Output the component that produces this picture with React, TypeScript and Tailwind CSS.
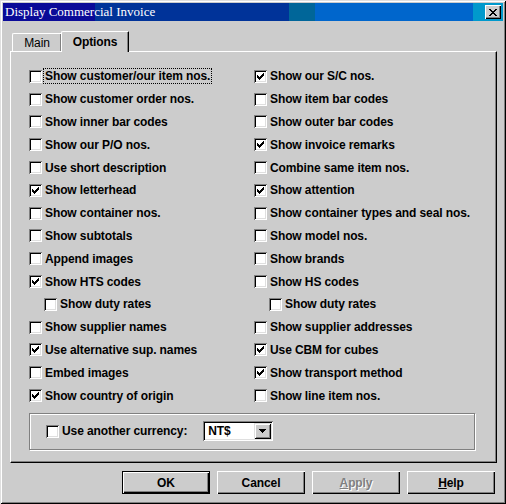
import React from "react";

type Opt = { label: string; checked?: boolean; indent?: boolean; focus?: boolean };

const left: Opt[] = [
  { label: "Show customer/our item nos.", focus: true },
  { label: "Show customer order nos." },
  { label: "Show inner bar codes" },
  { label: "Show our P/O nos." },
  { label: "Use short description" },
  { label: "Show letterhead", checked: true },
  { label: "Show container nos." },
  { label: "Show subtotals" },
  { label: "Append images" },
  { label: "Show HTS codes", checked: true },
  { label: "Show duty rates", indent: true },
  { label: "Show supplier names" },
  { label: "Use alternative sup. names", checked: true },
  { label: "Embed images" },
  { label: "Show country of origin", checked: true },
];

const right: Opt[] = [
  { label: "Show our S/C nos.", checked: true },
  { label: "Show item bar codes" },
  { label: "Show outer bar codes" },
  { label: "Show invoice remarks", checked: true },
  { label: "Combine same item nos." },
  { label: "Show attention", checked: true },
  { label: "Show container types and seal nos." },
  { label: "Show model nos." },
  { label: "Show brands" },
  { label: "Show HS codes" },
  { label: "Show duty rates", indent: true },
  { label: "Show supplier addresses" },
  { label: "Use CBM for cubes", checked: true },
  { label: "Show transport method", checked: true },
  { label: "Show line item nos." },
];

// sunken 13px box, win95 style
const CheckBox = ({ checked }: { checked?: boolean }) => (
  <span className="w-[13px] h-[13px] shrink-0 bg-white shadow-[inset_1px_1px_0_#808080,inset_-1px_-1px_0_#ffffff,inset_2px_2px_0_#000000,inset_-2px_-2px_0_#dfdfdf] flex">
    {checked && (
      <svg width="13" height="13" viewBox="0 0 13 13" shapeRendering="crispEdges">
        <path d="M3 5h1v1h1v1h1V6h1V5h1V4h1V3h1v3h-1v1h-1v1h-1v1h-1v1H5V9H4V8H3z" fill="#000" />
      </svg>
    )}
  </span>
);

const Row = ({ opt }: { opt: Opt }) => (
  <div className={`h-[22.8px] flex items-center ${opt.indent ? "pl-[15px]" : ""}`}>
    <CheckBox checked={opt.checked} />
    <span
      className={`ml-[2px] px-[1px] leading-[14px] ${
        opt.focus ? "outline outline-1 outline-dotted outline-black" : ""
      }`}
    >
      {opt.label}
    </span>
  </div>
);

const Button = ({ children, def, disabled }: { children: React.ReactNode; def?: boolean; disabled?: boolean }) => (
  <div
    className={`w-[88px] h-[23px] flex items-center justify-center bg-[#cccccc] ${
      def
        ? "border border-black shadow-[inset_1px_1px_0_#ffffff,inset_-1px_-1px_0_#000000,inset_-2px_-2px_0_#808080]"
        : "shadow-[inset_1px_1px_0_#ffffff,inset_-1px_-1px_0_#000000,inset_-2px_-2px_0_#808080]"
    } ${disabled ? "text-[#808080] [text-shadow:1px_1px_0_#ffffff]" : "text-black"}`}
  >
    {children}
  </div>
);

export default function App() {
  return (
    <div className="w-[506px] h-[504px] bg-[#cccccc] p-[3px] flex flex-col shadow-[inset_1px_1px_0_#dfdfdf,inset_-1px_-1px_0_#000000,inset_2px_2px_0_#ffffff,inset_-2px_-2px_0_#808080] font-['Liberation_Sans',Arial,sans-serif] text-[12px] font-bold tracking-[-0.1px] text-black">
      {/* title bar */}
      <div className="h-[18px] flex items-center justify-between pl-[2px] pr-[2px] bg-[linear-gradient(90deg,#0a0a98_0_92px,#003399_92px_286px,#006699_286px_312px,#0066cc_312px_470px,#0099cc_470px)]">
        <span className="font-['Liberation_Serif','Times_New_Roman',serif] font-normal tracking-normal text-[13px] text-white leading-[18px]">
          Display Commercial Invoice
        </span>
        <div className="w-[16px] h-[14px] bg-[#cccccc] flex items-center justify-center shadow-[inset_1px_1px_0_#ffffff,inset_-1px_-1px_0_#000000,inset_-2px_-2px_0_#808080]">
          <svg width="8" height="7" viewBox="0 0 8 7" shapeRendering="crispEdges">
            <path d="M0 0h2v1h1v1h2V1h1V0h2v1H7v1H6v1H5v1h1v1h1v1h1v1H6V6H5V5H3v1H2v1H0V6h1V5h1V4h1V3H2V2H1V1H0z" fill="#000" />
          </svg>
        </div>
      </div>

      {/* tabs */}
      <div className="mt-[10px] ml-[9px] flex items-end h-[20px] relative z-10">
        <div className="w-[49px] h-[18px] flex items-center justify-center font-normal border-l border-t border-white rounded-tl-[2px] shadow-[inset_-1px_0_0_#808080] ">
          Main
        </div>
        <div className="w-[68px] h-[21px] -mb-[1px] bg-[#cccccc] flex items-center justify-center border-l border-t border-white border-r border-r-black rounded-tl-[2px] rounded-tr-[1px] shadow-[inset_-1px_0_0_#808080]">
          Options
        </div>
      </div>

      {/* panel */}
      <div className="ml-[7px] mr-[6px] h-[412px] border-l border-t border-white border-r border-b border-r-black border-b-black shadow-[inset_-1px_-1px_0_#808080] pt-[13px] pl-[18px]">
        <div className="grid grid-cols-[225px_1fr]">
          {left.map((o, i) => (
            <React.Fragment key={i}>
              <Row opt={o} />
              <Row opt={right[i]} />
            </React.Fragment>
          ))}
        </div>
        <div className="mt-[6px] w-[446px] h-[37px] border border-[#808080] shadow-[1px_1px_0_#ffffff,inset_1px_1px_0_#ffffff] flex items-center pl-[16px]">
          <CheckBox />
          <span className="ml-[3px]">Use another currency:</span>
          <div className="ml-[16px] w-[70px] h-[20px] bg-white flex items-center justify-between pl-[5px] pr-[2px] shadow-[inset_1px_1px_0_#808080,inset_-1px_-1px_0_#ffffff,inset_2px_2px_0_#000000,inset_-2px_-2px_0_#dfdfdf]">
            <span>NT$</span>
            <div className="w-[17px] h-[16px] bg-[#cccccc] flex items-center justify-center shadow-[inset_1px_1px_0_#dfdfdf,inset_-1px_-1px_0_#000000,inset_2px_2px_0_#ffffff,inset_-2px_-2px_0_#808080]">
              <svg width="7" height="4" viewBox="0 0 7 4" shapeRendering="crispEdges">
                <path d="M0 0h7v1H6v1H5v1H4v1H3V3H2V2H1V1H0z" fill="#000" />
              </svg>
            </div>
          </div>
        </div>
      </div>

      {/* buttons */}
      <div className="mt-[8px] mr-[8px] flex justify-end gap-[7px]">
        <Button def>OK</Button>
        <Button>Cancel</Button>
        <Button disabled>
          <span><span className="underline">A</span>pply</span>
        </Button>
        <Button>
          <span><span className="underline">H</span>elp</span>
        </Button>
      </div>
    </div>
  );
}
